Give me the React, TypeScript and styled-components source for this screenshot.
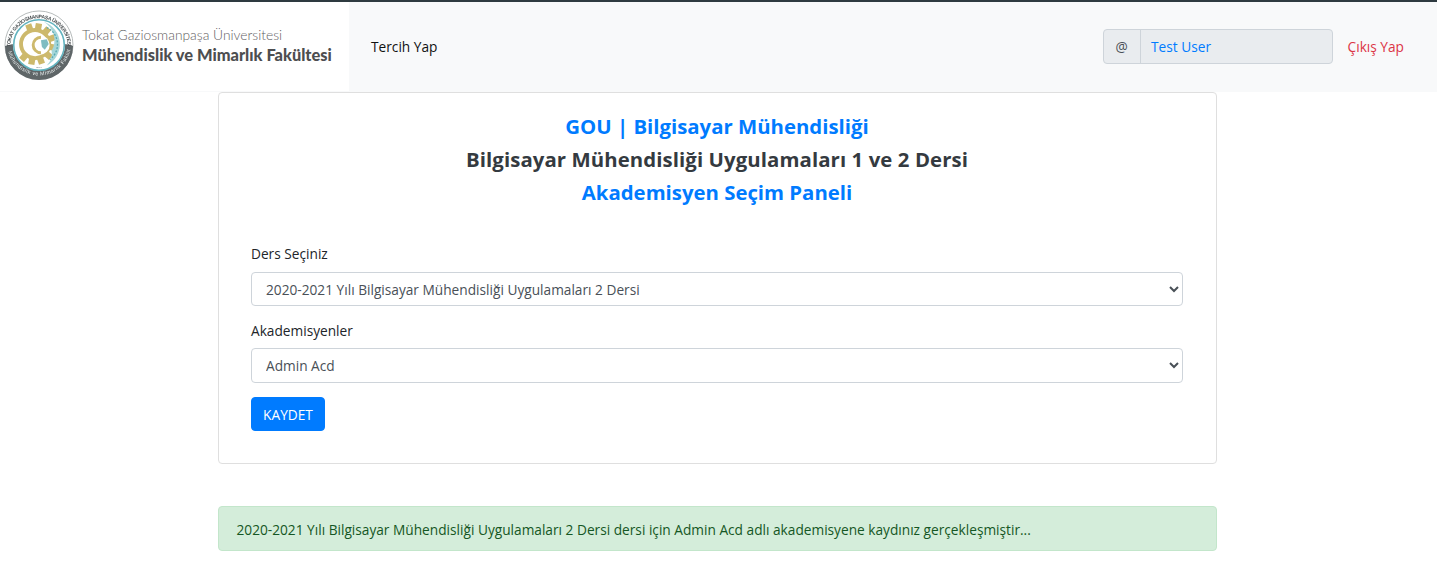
import React from "react";
import styled, { createGlobalStyle } from "styled-components";

const GlobalStyle = createGlobalStyle`
  html, body {
    margin: 0;
    padding: 0;
    background: #fff;
    font-family: "Open Sans", "Noto Sans", sans-serif;
    font-size: 13.7px;
    color: #212529;
  }
  * { box-sizing: border-box; }
`;

const gearTeeth = [-20, 10, 40, 70, 100, 130, 160, 190, 220];

function Logo() {
  return (
    <LogoSvg width="70" height="70" viewBox="0 0 72 72">
      <defs>
        <path id="arc-top" d="M6.5 38 A29.5 29.5 0 0 1 65.5 38" />
        <path id="arc-bottom" d="M3.5 40 A33 33 0 0 0 68.5 40" />
      </defs>
      <circle cx="36" cy="36" r="35" fill="#fff" stroke="#b5baba" strokeWidth="1" />
      <path d="M1 37 A35 35 0 0 0 71 37 L63 35 A27 27 0 0 1 9 35 Z" fill="#5f6668" />
      <text fontSize="5.2" fontWeight="700" fill="#4a5052" fontFamily="Liberation Sans, sans-serif">
        <textPath href="#arc-top" textLength="92">TOKAT GAZİOSMANPAŞA ÜNİVERSİTESİ</textPath>
      </text>
      <text fontSize="5.4" fill="#e8eded" fontFamily="Liberation Sans, sans-serif">
        <textPath href="#arc-bottom" startOffset="3" textLength="96">Mühendislik ve Mimarlık Fakültesi</textPath>
      </text>
      <circle cx="36" cy="36" r="26" fill="#fff" stroke="#62b3bf" strokeWidth="1.6" />
      <g fill="#cdb96c">
        {gearTeeth.map((deg) => (
          <rect key={deg} x="29" y="13.5" width="6.5" height="6" transform={`rotate(${deg} 32 35)`} />
        ))}
      </g>
      <circle cx="32" cy="35" r="14.5" fill="none" stroke="#cdb96c" strokeWidth="4" />
      <path d="M41 12 A24.5 24.5 0 0 1 44 57 A17 17 0 0 0 49 42 A22 22 0 0 0 41 12 Z" fill="#a6d6d9" />
      <path d="M44 18 A19 19 0 0 1 55 36 A19 19 0 0 1 47 51" fill="none" stroke="#57a9b2" strokeWidth="1.3" strokeDasharray="2 1.5" />
      <circle cx="37" cy="36" r="10" fill="#fff" />
      <path d="M38 28 A8 8 0 1 0 38 44" fill="none" stroke="#cdb96c" strokeWidth="3" />
      <path d="M38 31 L44 30 L46 35 L42 41 L39 38 Z" fill="#7fbcc2" />
      <text x="36" y="60" fontSize="2.6" textAnchor="middle" fill="#6b7173" fontFamily="Liberation Sans, sans-serif">2004</text>
    </LogoSvg>
  );
}

const LogoSvg = styled.svg`
  flex: none;
  margin-bottom: 4px;
  filter: blur(0.3px);
`;

const TopBar = styled.nav`
  display: flex;
  align-items: stretch;
  height: 92px;
  border-top: 2px solid #2e3a40;
  background: #f8f9fa;
`;

const Brand = styled.div`
  display: flex;
  align-items: center;
  gap: 8px;
  width: 349px;
  height: 89px;
  padding: 0 0 0 4px;
  background: #fff;
`;

const BrandText = styled.div`
  display: flex;
  flex-direction: column;
  gap: 2px;
  margin-bottom: 2px;
  white-space: nowrap;
  color: #5f6062;
`;

const BrandTop = styled.span`
  font-family: "Lato", sans-serif;
  font-size: 13.8px;
  line-height: 17px;
  font-weight: 300;
`;

const BrandBottom = styled.span`
  font-family: "Lato", sans-serif;
  font-size: 16.4px;
  line-height: 20px;
  font-weight: 900;
  color: #4d4e50;
`;

const NavLink = styled.a`
  align-self: center;
  margin: 0 0 2px 22px;
  color: #111;
  text-decoration: none;
`;

const UserArea = styled.div`
  display: flex;
  align-items: center;
  margin: 0 33px 2px auto;
`;

const InputGroup = styled.div`
  display: flex;
  width: 230px;
  height: 35px;
  border: 1px solid #ced4da;
  border-radius: 4px;
  background: #e9ecef;
`;

const GroupAddon = styled.span`
  display: flex;
  align-items: center;
  justify-content: center;
  width: 37px;
  border-right: 1px solid #ced4da;
  color: #495057;
`;

const UserName = styled.span`
  display: flex;
  align-items: center;
  padding-left: 10.5px;
  color: #007bff;
`;

const Logout = styled.a`
  margin-left: 15px;
  color: #dc3545;
  text-decoration: none;
`;

const Page = styled.main`
  display: flex;
  flex-direction: column;
  width: 999px;
  margin: 0 0 0 218px;
`;

const Card = styled.section`
  height: 372px;
  padding: 17px 33px 0 32px;
  border: 1px solid #dfdfdf;
  border-radius: 4px;
  background: #fff;
`;

const Heading = styled.h4<{ $accent?: boolean }>`
  margin: 0;
  font-size: 20.35px;
  line-height: 33px;
  font-weight: 700;
  text-align: center;
  letter-spacing: ${(p) => (p.$accent ? "0" : "0.09px")};
  color: ${(p) => (p.$accent ? "#007bff" : "#343a40")};
`;

const Form = styled.form`
  display: flex;
  flex-direction: column;
  margin-top: 34px;
`;

const Label = styled.label<{ $tight?: boolean }>`
  height: 21px;
  margin-bottom: ${(p) => (p.$tight ? "7px" : "8px")};
  line-height: 21px;
  color: #212529;
`;

const Select = styled.select<{ $tall?: boolean }>`
  width: 100%;
  height: ${(p) => (p.$tall ? "35px" : "34px")};
  margin-bottom: 14px;
  padding: 0 10px;
  border: 1px solid #ced4da;
  border-radius: 4px;
  background: #fff;
  font: inherit;
  color: #495057;
`;

const SaveButton = styled.button`
  width: 74px;
  height: 34px;
  padding: 0;
  border: 1px solid #007bff;
  border-radius: 4px;
  background: #007bff;
  font: inherit;
  color: #fff;
`;

const Alert = styled.div`
  height: 45px;
  margin-top: 42px;
  padding: 0 17.5px;
  border: 1px solid #c3e6cb;
  border-radius: 4px;
  background: #d4edda;
  line-height: 46px;
  color: #155724;
  white-space: nowrap;
`;

export default function App() {
  return (
    <>
      <GlobalStyle />
      <TopBar>
        <Brand>
          <Logo />
          <BrandText>
            <BrandTop>Tokat Gaziosmanpaşa Üniversitesi</BrandTop>
            <BrandBottom>Mühendislik ve Mimarlık Fakültesi</BrandBottom>
          </BrandText>
        </Brand>
        <NavLink href="#">Tercih Yap</NavLink>
        <UserArea>
          <InputGroup>
            <GroupAddon>@</GroupAddon>
            <UserName>Test User</UserName>
          </InputGroup>
          <Logout href="#">Çıkış Yap</Logout>
        </UserArea>
      </TopBar>
      <Page>
        <Card>
          <Heading $accent>GOU | Bilgisayar Mühendisliği</Heading>
          <Heading>Bilgisayar Mühendisliği Uygulamaları 1 ve 2 Dersi</Heading>
          <Heading $accent>Akademisyen Seçim Paneli</Heading>
          <Form>
            <Label>Ders Seçiniz</Label>
            <Select>
              <option>2020-2021 Yılı Bilgisayar Mühendisliği Uygulamaları 2 Dersi</option>
            </Select>
            <Label $tight>Akademisyenler</Label>
            <Select $tall>
              <option>Admin Acd</option>
            </Select>
            <div>
              <SaveButton type="button">KAYDET</SaveButton>
            </div>
          </Form>
        </Card>
        <Alert>
          2020-2021 Yılı Bilgisayar Mühendisliği Uygulamaları 2 Dersi dersi için Admin Acd adlı akademisyene kaydınız gerçekleşmiştir...
        </Alert>
      </Page>
    </>
  );
}
